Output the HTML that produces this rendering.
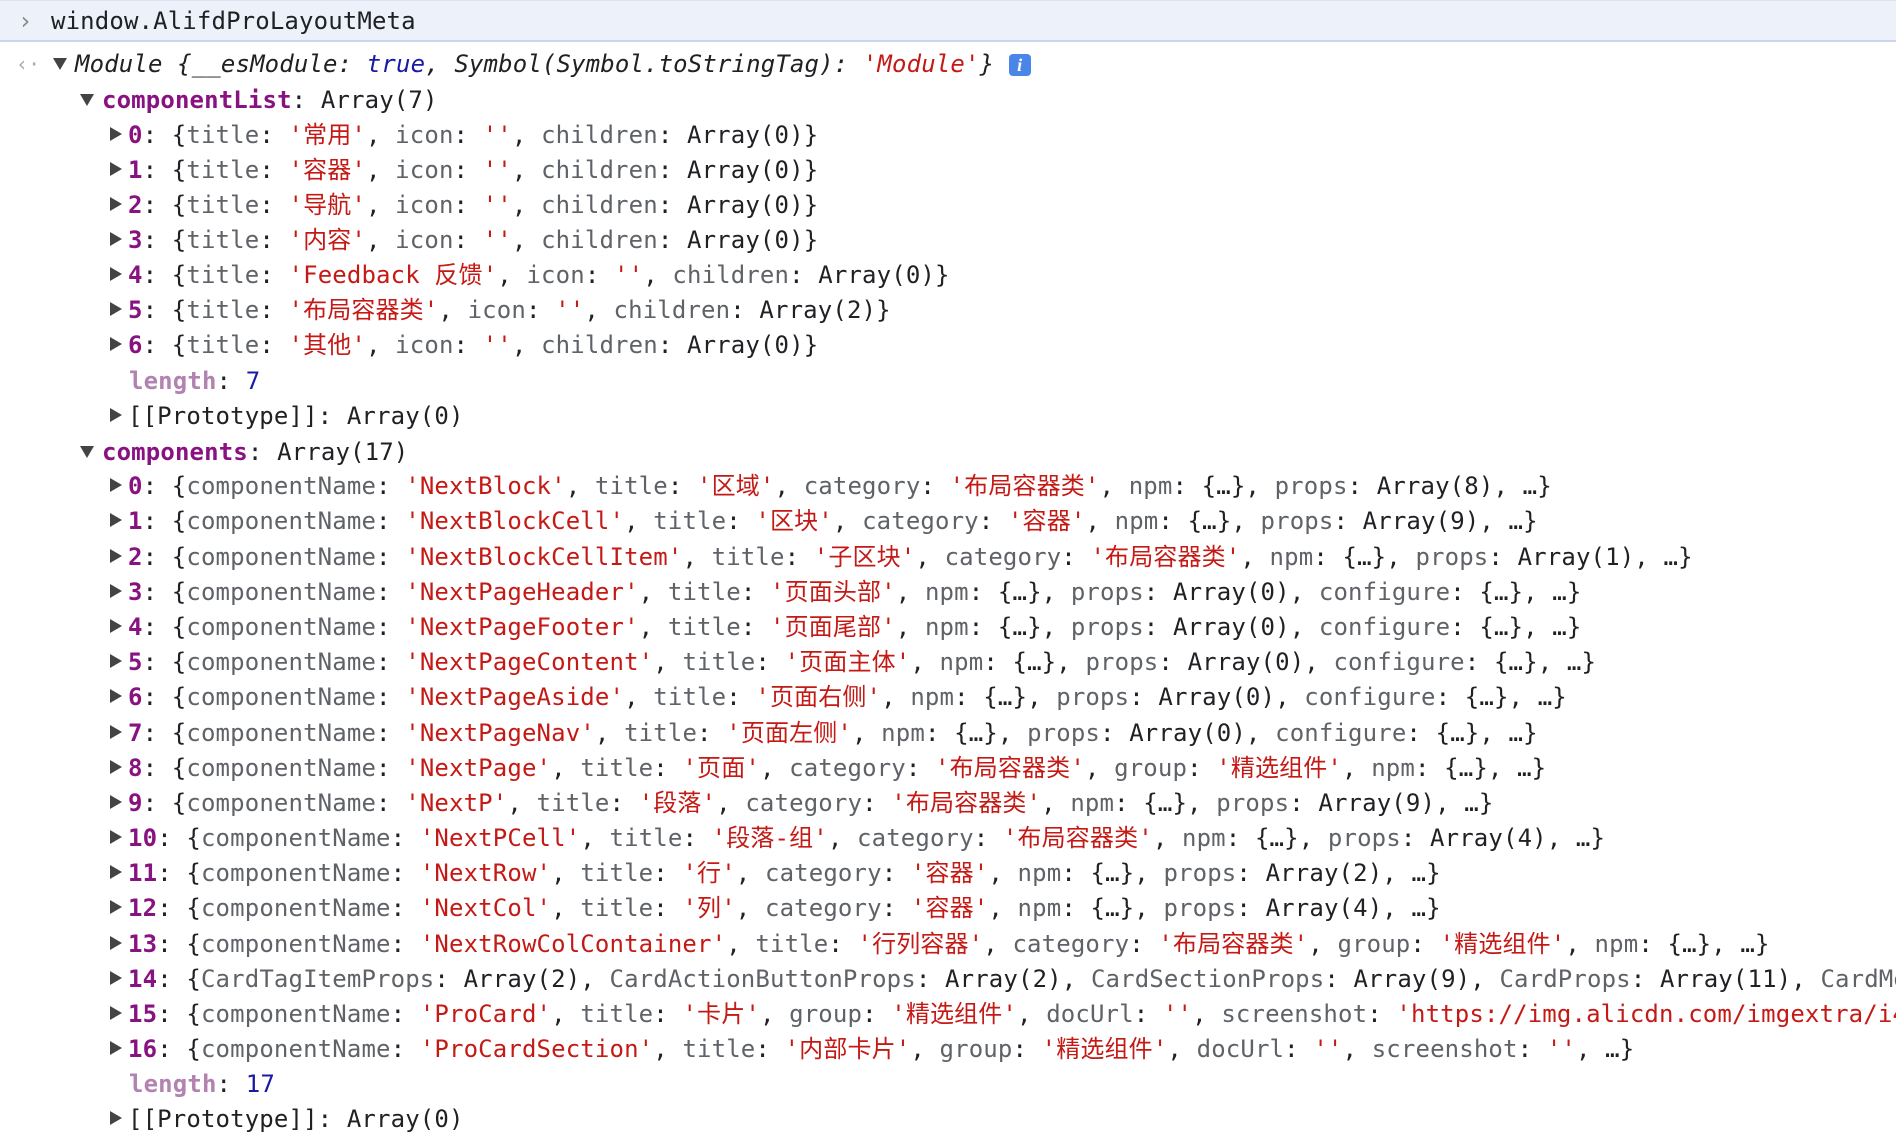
<!DOCTYPE html>
<html><head><meta charset="utf-8"><style>
body{margin:0;width:1896px;height:1138px;overflow:hidden;background:#fff;font-family:"DejaVu Sans Mono","Liberation Mono","Noto Sans CJK SC",monospace;font-size:24px;color:#202124;letter-spacing:0.14px}
.bar{position:absolute;left:0;top:0;width:1896px;height:39px;background:#edf1f9;border-bottom:2px solid #cbd6ee;border-top:1px solid #dde3f0}
.l{position:absolute;white-space:pre;line-height:35px;height:35px}
.k{color:#881280;font-weight:bold}
.g{color:#5f6368}
.s{color:#c41a16}
.n{color:#1a1aa6}
.p{color:#b283b0;font-weight:bold}
.t{display:inline-block;width:0;height:0;border-left:7px solid transparent;border-right:7px solid transparent;border-top:12px solid #444;margin-right:8px;vertical-align:2px}
.r{display:inline-block;width:0;height:0;border-top:7px solid transparent;border-bottom:7px solid transparent;border-left:12px solid #444;margin-right:6px;vertical-align:2px}
.i{display:inline-block;width:22px;height:22px;background:#4a86e8;color:#fff;border-radius:4px;font-size:18px;font-style:italic;text-align:center;line-height:22px;vertical-align:1px;font-family:"Liberation Serif",serif;font-weight:bold}
</style></head><body>
<div class="bar"></div>
<div class="l" style="left:18px;top:4px;color:#888">&#x203A;</div>
<div class="l" style="left:51px;top:4px">window.AlifdProLayoutMeta</div>
<div class="l" style="left:16px;top:47px;color:#aaa;font-size:20px">&#x2039;&#xB7;</div>
<div class="l" style="left:53px;top:47px"><span class="t"></span><i>Module {__esModule: <span class="n">true</span>, Symbol(Symbol.toStringTag): <span class="s">'Module'</span>}</i> <span class="i">i</span></div>
<div class="l" style="left:80px;top:83px"><span class="t"></span><span class="k">componentList</span>: Array(7)</div>
<div class="l" style="left:110px;top:118px"><span class="r"></span><span class="k">0</span>: {<span class="g">title</span>: <span class="s">'常用'</span>, <span class="g">icon</span>: <span class="s">''</span>, <span class="g">children</span>: Array(0)}</div>
<div class="l" style="left:110px;top:153px"><span class="r"></span><span class="k">1</span>: {<span class="g">title</span>: <span class="s">'容器'</span>, <span class="g">icon</span>: <span class="s">''</span>, <span class="g">children</span>: Array(0)}</div>
<div class="l" style="left:110px;top:188px"><span class="r"></span><span class="k">2</span>: {<span class="g">title</span>: <span class="s">'导航'</span>, <span class="g">icon</span>: <span class="s">''</span>, <span class="g">children</span>: Array(0)}</div>
<div class="l" style="left:110px;top:223px"><span class="r"></span><span class="k">3</span>: {<span class="g">title</span>: <span class="s">'内容'</span>, <span class="g">icon</span>: <span class="s">''</span>, <span class="g">children</span>: Array(0)}</div>
<div class="l" style="left:110px;top:258px"><span class="r"></span><span class="k">4</span>: {<span class="g">title</span>: <span class="s">'Feedback 反馈'</span>, <span class="g">icon</span>: <span class="s">''</span>, <span class="g">children</span>: Array(0)}</div>
<div class="l" style="left:110px;top:293px"><span class="r"></span><span class="k">5</span>: {<span class="g">title</span>: <span class="s">'布局容器类'</span>, <span class="g">icon</span>: <span class="s">''</span>, <span class="g">children</span>: Array(2)}</div>
<div class="l" style="left:110px;top:328px"><span class="r"></span><span class="k">6</span>: {<span class="g">title</span>: <span class="s">'其他'</span>, <span class="g">icon</span>: <span class="s">''</span>, <span class="g">children</span>: Array(0)}</div>
<div class="l" style="left:129px;top:364px"><span class="p">length</span>: <span class="n">7</span></div>
<div class="l" style="left:110px;top:399px"><span class="r"></span>[[Prototype]]: Array(0)</div>
<div class="l" style="left:80px;top:435px"><span class="t"></span><span class="k">components</span>: Array(17)</div>
<div class="l" style="left:110px;top:469px"><span class="r"></span><span class="k">0</span>: {<span class="g">componentName</span>: <span class="s">'NextBlock'</span>, <span class="g">title</span>: <span class="s">'区域'</span>, <span class="g">category</span>: <span class="s">'布局容器类'</span>, <span class="g">npm</span>: {…}, <span class="g">props</span>: Array(8), …}</div>
<div class="l" style="left:110px;top:504px"><span class="r"></span><span class="k">1</span>: {<span class="g">componentName</span>: <span class="s">'NextBlockCell'</span>, <span class="g">title</span>: <span class="s">'区块'</span>, <span class="g">category</span>: <span class="s">'容器'</span>, <span class="g">npm</span>: {…}, <span class="g">props</span>: Array(9), …}</div>
<div class="l" style="left:110px;top:540px"><span class="r"></span><span class="k">2</span>: {<span class="g">componentName</span>: <span class="s">'NextBlockCellItem'</span>, <span class="g">title</span>: <span class="s">'子区块'</span>, <span class="g">category</span>: <span class="s">'布局容器类'</span>, <span class="g">npm</span>: {…}, <span class="g">props</span>: Array(1), …}</div>
<div class="l" style="left:110px;top:575px"><span class="r"></span><span class="k">3</span>: {<span class="g">componentName</span>: <span class="s">'NextPageHeader'</span>, <span class="g">title</span>: <span class="s">'页面头部'</span>, <span class="g">npm</span>: {…}, <span class="g">props</span>: Array(0), <span class="g">configure</span>: {…}, …}</div>
<div class="l" style="left:110px;top:610px"><span class="r"></span><span class="k">4</span>: {<span class="g">componentName</span>: <span class="s">'NextPageFooter'</span>, <span class="g">title</span>: <span class="s">'页面尾部'</span>, <span class="g">npm</span>: {…}, <span class="g">props</span>: Array(0), <span class="g">configure</span>: {…}, …}</div>
<div class="l" style="left:110px;top:645px"><span class="r"></span><span class="k">5</span>: {<span class="g">componentName</span>: <span class="s">'NextPageContent'</span>, <span class="g">title</span>: <span class="s">'页面主体'</span>, <span class="g">npm</span>: {…}, <span class="g">props</span>: Array(0), <span class="g">configure</span>: {…}, …}</div>
<div class="l" style="left:110px;top:680px"><span class="r"></span><span class="k">6</span>: {<span class="g">componentName</span>: <span class="s">'NextPageAside'</span>, <span class="g">title</span>: <span class="s">'页面右侧'</span>, <span class="g">npm</span>: {…}, <span class="g">props</span>: Array(0), <span class="g">configure</span>: {…}, …}</div>
<div class="l" style="left:110px;top:716px"><span class="r"></span><span class="k">7</span>: {<span class="g">componentName</span>: <span class="s">'NextPageNav'</span>, <span class="g">title</span>: <span class="s">'页面左侧'</span>, <span class="g">npm</span>: {…}, <span class="g">props</span>: Array(0), <span class="g">configure</span>: {…}, …}</div>
<div class="l" style="left:110px;top:751px"><span class="r"></span><span class="k">8</span>: {<span class="g">componentName</span>: <span class="s">'NextPage'</span>, <span class="g">title</span>: <span class="s">'页面'</span>, <span class="g">category</span>: <span class="s">'布局容器类'</span>, <span class="g">group</span>: <span class="s">'精选组件'</span>, <span class="g">npm</span>: {…}, …}</div>
<div class="l" style="left:110px;top:786px"><span class="r"></span><span class="k">9</span>: {<span class="g">componentName</span>: <span class="s">'NextP'</span>, <span class="g">title</span>: <span class="s">'段落'</span>, <span class="g">category</span>: <span class="s">'布局容器类'</span>, <span class="g">npm</span>: {…}, <span class="g">props</span>: Array(9), …}</div>
<div class="l" style="left:110px;top:821px"><span class="r"></span><span class="k">10</span>: {<span class="g">componentName</span>: <span class="s">'NextPCell'</span>, <span class="g">title</span>: <span class="s">'段落-组'</span>, <span class="g">category</span>: <span class="s">'布局容器类'</span>, <span class="g">npm</span>: {…}, <span class="g">props</span>: Array(4), …}</div>
<div class="l" style="left:110px;top:856px"><span class="r"></span><span class="k">11</span>: {<span class="g">componentName</span>: <span class="s">'NextRow'</span>, <span class="g">title</span>: <span class="s">'行'</span>, <span class="g">category</span>: <span class="s">'容器'</span>, <span class="g">npm</span>: {…}, <span class="g">props</span>: Array(2), …}</div>
<div class="l" style="left:110px;top:891px"><span class="r"></span><span class="k">12</span>: {<span class="g">componentName</span>: <span class="s">'NextCol'</span>, <span class="g">title</span>: <span class="s">'列'</span>, <span class="g">category</span>: <span class="s">'容器'</span>, <span class="g">npm</span>: {…}, <span class="g">props</span>: Array(4), …}</div>
<div class="l" style="left:110px;top:927px"><span class="r"></span><span class="k">13</span>: {<span class="g">componentName</span>: <span class="s">'NextRowColContainer'</span>, <span class="g">title</span>: <span class="s">'行列容器'</span>, <span class="g">category</span>: <span class="s">'布局容器类'</span>, <span class="g">group</span>: <span class="s">'精选组件'</span>, <span class="g">npm</span>: {…}, …}</div>
<div class="l" style="left:110px;top:962px"><span class="r"></span><span class="k">14</span>: {<span class="g">CardTagItemProps</span>: Array(2), <span class="g">CardActionButtonProps</span>: Array(2), <span class="g">CardSectionProps</span>: Array(9), <span class="g">CardProps</span>: Array(11), <span class="g">CardMeta</span></div>
<div class="l" style="left:110px;top:997px"><span class="r"></span><span class="k">15</span>: {<span class="g">componentName</span>: <span class="s">'ProCard'</span>, <span class="g">title</span>: <span class="s">'卡片'</span>, <span class="g">group</span>: <span class="s">'精选组件'</span>, <span class="g">docUrl</span>: <span class="s">''</span>, <span class="g">screenshot</span>: <span class="s">'https://img.alicdn.com/imgextra/i4/</span></div>
<div class="l" style="left:110px;top:1032px"><span class="r"></span><span class="k">16</span>: {<span class="g">componentName</span>: <span class="s">'ProCardSection'</span>, <span class="g">title</span>: <span class="s">'内部卡片'</span>, <span class="g">group</span>: <span class="s">'精选组件'</span>, <span class="g">docUrl</span>: <span class="s">''</span>, <span class="g">screenshot</span>: <span class="s">''</span>, …}</div>
<div class="l" style="left:129px;top:1067px"><span class="p">length</span>: <span class="n">17</span></div>
<div class="l" style="left:110px;top:1102px"><span class="r"></span>[[Prototype]]: Array(0)</div>
</body></html>
